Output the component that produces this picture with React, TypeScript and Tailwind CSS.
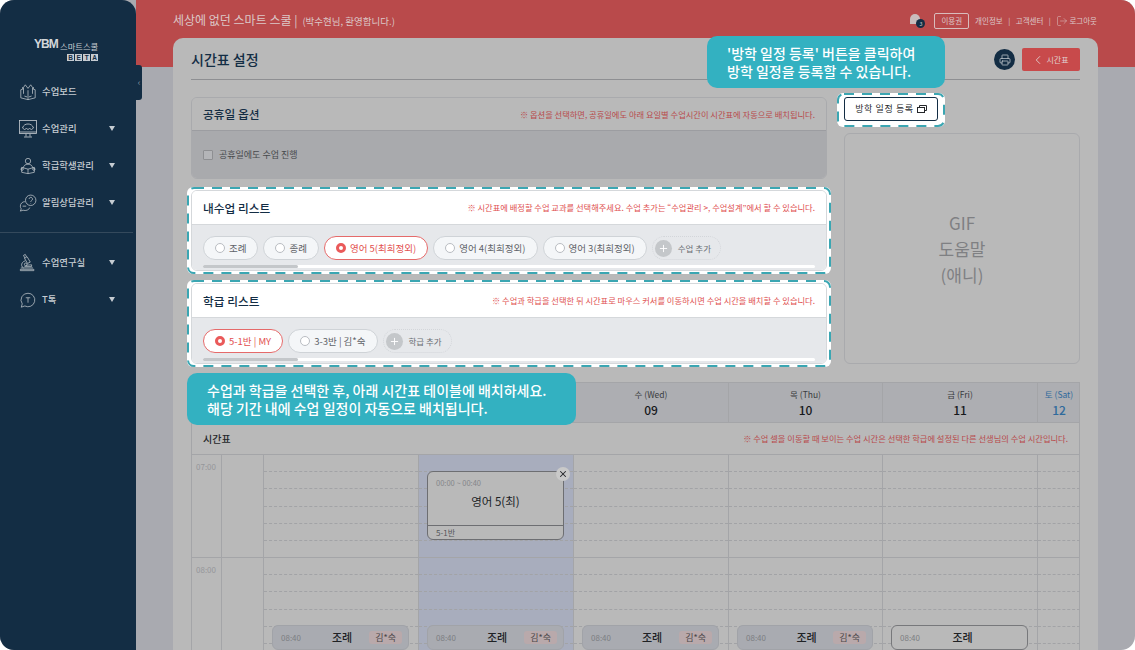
import { ChevronLeft, LogOut, Plus, Printer, X } from "lucide-react";
import type { ReactNode } from "react";

const nanum = "font-['Noto_Sans_CJK_KR','Noto_Sans',sans-serif]";

const topMenu = [
  { label: "수업보드", icon: "book", caret: false },
  { label: "수업관리", icon: "monitor", caret: true },
  { label: "학급학생관리", icon: "student", caret: true },
  { label: "알림상담관리", icon: "chat", caret: true },
];

const bottomMenu = [
  { label: "수업연구실", icon: "lab", caret: true },
  { label: "T톡", icon: "talk", caret: true },
];

// the first three day cells sit under the callout in the picture
const days = [
  { label: "", num: "" },
  { label: "", num: "" },
  { label: "", num: "" },
  { label: "수 (Wed)", num: "09" },
  { label: "목 (Thu)", num: "10" },
  { label: "금 (Fri)", num: "11" },
  { label: "토 (Sat)", num: "12", sat: true },
];

function NavIcon({ name }: { name: string }) {
  const common = {
    width: 18,
    height: 18,
    viewBox: "0 0 20 20",
    fill: "none",
    stroke: "#c9ced3",
    strokeWidth: 0.8,
  };
  if (name === "book") {
    return (
      <svg {...common}>
        <path d="M2 7.5v9l8 2 8-2v-9l-2-.6M2 7.5l2-.6M10 18.5V8" />
        <path d="M5 12V5l2-3 3 4 3-4 2 3v7" />
        <path d="M4 7V4.5M16 7V4.5M6 14.5l3 1M14 14.5l-3 1" />
      </svg>
    );
  }
  if (name === "monitor") {
    return (
      <svg {...common} viewBox="0 0 18 18">
        <rect x="0.5" y="0.5" width="17" height="13" />
        <path d="M0.5 12h17M7 14v2.500M11 14v2.500M5 17h8" />
        <path d="M3.500 8c1-3 3-4 5.500-4s4.500 1 5.500 4l-2 1.500-2-1-1.500 1-1.500-1-2 1z" />
      </svg>
    );
  }
  if (name === "student") {
    return (
      <svg {...common}>
        <circle cx="10" cy="4.500" r="3" />
        <path d="M5 12c0-2.500 2-4 5-4s5 1.500 5 4" />
        <path d="M3 11.500l7 2 7-2v5.500l-7 1.500-7-1.500zM10 13.500v5" />
        <circle cx="3.500" cy="13.500" r="1.300" />
        <circle cx="16.500" cy="13.500" r="1.300" />
      </svg>
    );
  }
  if (name === "chat") {
    return (
      <svg {...common}>
        <circle cx="13" cy="7" r="5.800" />
        <path d="M11.200 5.500a1.900 1.900 0 1 1 2.800 1.800c-.7.4-1 .8-1 1.500M13 10.200v.5" />
        <path d="M6.500 8.500A5 5 0 0 0 1.500 13.500c0 1.300.4 2.300 1 3l-1 2.500 3-1c3 1 6.500 0 7.500-3" />
        <path d="M4 13.500h4" />
      </svg>
    );
  }
  if (name === "lab") {
    return (
      <svg {...common} width={18} height={20}>
        <path d="M5 1.500l2-1 1.500 3-2 1zM6 4.500l3.500 6 3-1.500-3.500-6" />
        <path d="M7 7.500c-3 1-4.500 3-4 5.500.3 1.200 1 2 2 2.500M2 15.500h13.500M1.500 17h15v1.500h-15zM8 12.500l6-.5v2H6" />
        <circle cx="7.500" cy="11.500" r="1.500" />
      </svg>
    );
  }
  return (
    <svg {...common}>
      <path d="M10 2.500a7.500 7.500 0 1 1-3.500 14.100L2.500 18l1.100-3.700A7.500 7.500 0 0 1 10 2.500z" />
      <path d="M7.500 7.500h5M10 7.500v5.500" />
    </svg>
  );
}

function NavItem({ label, icon, caret }: { label: string; icon: string; caret: boolean }) {
  return (
    <div className="flex h-[37px] items-center pl-[19px] pr-[21px]">
      <div className="flex w-[23px] shrink-0 items-center">
        <NavIcon name={icon} />
      </div>
      <span className="flex-1 text-[9.400px] font-medium text-[#c6ccd2]">{label}</span>
      {caret && <span className="h-0 w-0 border-x-[3px] border-t-[5px] border-x-transparent border-t-[#c6ccd2]" />}
    </div>
  );
}

function Logo() {
  return (
    <div className="ml-[34px] flex h-[30px] items-start gap-[2px]">
      <span className="w-[24px] whitespace-nowrap text-[12px] leading-[14px] font-black tracking-[-1px] text-[#d4d7da] font-['Liberation_Sans']">
        YBM
      </span>
      <div className="mt-[4px] flex flex-col items-end gap-[3px]">
        <span className="text-[8.300px] leading-[10px] text-[#c6ccd2]">스마트스쿨</span>
        <div className="flex gap-px">
          {"BETA".split("").map((ch) => (
            <span
              key={ch}
              className="flex h-[7px] w-[7px] items-center justify-center bg-[#c6ccd2] font-['Liberation_Sans'] text-[6.500px] font-bold text-[#132d44]"
            >
              {ch}
            </span>
          ))}
        </div>
      </div>
    </div>
  );
}

function Sidebar() {
  return (
    <aside className="relative z-10 h-full w-[136px] shrink-0 rounded-tr-[14px] bg-[#132d44] pt-[37px]">
      <Logo />
      <nav className="mt-[6px]">
        {topMenu.map((item) => (
          <NavItem key={item.label} {...item} />
        ))}
      </nav>
      <div className="mt-[11px] mb-[11px] mr-[3px] border-t border-[#34495c]" />
      <nav>
        {bottomMenu.map((item) => (
          <NavItem key={item.label} {...item} />
        ))}
      </nav>
      <div className="absolute top-[65px] right-[-6px] flex h-[35px] w-[6px] items-center justify-center rounded-r-[3px] bg-[#132d44] text-[9px] text-[#8492a0]">
        ‹
      </div>
    </aside>
  );
}

function Header() {
  return (
    <header className="flex h-[67px] items-start justify-between bg-[#b94a4b] pt-[13px] pl-[37px] pr-[38px] text-[#dcc8c8]">
      <div className="flex items-baseline gap-[5px]">
        <span className="text-[12px] leading-[14px]">세상에 없던 스마트 스쿨 |</span>
        <span className="text-[9.500px]">(박수현님, 환영합니다.)</span>
      </div>
      <div className="flex items-center text-[7.500px] leading-[14px]">
        <div className="relative mr-[9px] h-[16px] w-[15px]">
          <span className="absolute top-[1px] left-0 h-[10px] w-[10px] rounded-t-full bg-[#c9bcbc]" />
          <span className="absolute top-[6px] left-[6px] flex h-[9px] w-[9px] items-center justify-center rounded-full bg-[#132d44] text-[5.500px] text-[#c6ccd2]">
            3
          </span>
        </div>
        <span className="mr-[6px] rounded-[2px] border border-[#d9bcbc] px-[6px]">이용권</span>
        <span>개인정보</span>
        <span className="mx-[5.500px]">|</span>
        <span>고객센터</span>
        <span className="mx-[5.500px]">|</span>
        <LogOut size={12} strokeWidth={1} className="mr-[1px]" />
        <span>로그아웃</span>
      </div>
    </header>
  );
}

function Note({ children }: { children: ReactNode }) {
  return <p className="text-[8.250px] leading-none text-[#e0504f]">{children}</p>;
}

function Radio({ on }: { on?: boolean }) {
  if (on) {
    return <span className="h-[10px] w-[10px] shrink-0 rounded-full border-[3px] border-[#ea5a5a] bg-white" />;
  }
  return <span className="h-[10px] w-[10px] shrink-0 rounded-full border border-[#b9bdc2] bg-white" />;
}

function Chip({ label, on }: { label: string; on?: boolean }) {
  return (
    <div
      className={
        on
          ? "flex h-[24px] shrink-0 items-center gap-[4px] rounded-full border border-[#e56a6a] bg-white px-[11px] text-[9.500px] text-[#e2504f]"
          : "flex h-[24px] shrink-0 items-center gap-[4px] rounded-full border border-[#cfd3d7] bg-[#f4f6f8] px-[11px] text-[9.500px] text-[#5f6368]"
      }
    >
      <Radio on={on} />
      <span className="whitespace-nowrap">{label}</span>
    </div>
  );
}

function AddChip({ label }: { label: string }) {
  return (
    <div className="flex h-[24px] shrink-0 items-center gap-[6px] rounded-full border border-dotted border-[#d3d6da] pl-[2px] pr-[9px] text-[8.500px] text-[#6a6e73]">
      <span className="flex h-[17px] w-[17px] items-center justify-center rounded-full bg-[#c4c7ca] text-white">
        <Plus size={11} strokeWidth={2} />
      </span>
      <span className="whitespace-nowrap">{label}</span>
    </div>
  );
}

function DashedFrame({ children, className }: { children: ReactNode; className: string }) {
  return (
    <div className={`relative rounded-[6px] bg-white ${className}`}>
      <svg className="pointer-events-none absolute inset-0 h-full w-full">
        <rect
          x="1"
          y="1"
          rx="6"
          className="h-[calc(100%-2px)] w-[calc(100%-2px)]"
          fill="none"
          stroke="#3ba6b2"
          strokeWidth="2"
          strokeDasharray="10 8"
        />
      </svg>
      {children}
    </div>
  );
}

function ListPanel({
  title,
  note,
  chips,
  add,
}: {
  title: string;
  note: string;
  chips: { label: string; on?: boolean }[];
  add: string;
}) {
  return (
    <DashedFrame className="-mx-[4px] px-[4px] py-[3px]">
      <div className="overflow-hidden rounded-[6px] border border-[#d5d8db]">
        <div className="flex h-[34px] items-center justify-between border-b border-[#d5d8db] bg-white px-[11px]">
          <h3 className="text-[11.700px] font-medium text-[#132d44]">{title}</h3>
          <Note>{note}</Note>
        </div>
        <div className="bg-[#e6e8eb] px-[11px] pt-[11px] pb-[2px]">
          <div className="flex gap-[5px]">
            {chips.map((c) => (
              <Chip key={c.label} {...c} />
            ))}
            <AddChip label={add} />
          </div>
          <div className="mt-[5px] h-[3px] rounded-full bg-white">
            <div className="h-full w-[95px] rounded-full bg-[#c4c7ca]" />
          </div>
        </div>
      </div>
    </DashedFrame>
  );
}

function HourBlock({ dashed }: { dashed: boolean }) {
  return (
    <div className="flex h-[103px] flex-col border-b border-[#a4a5a8]">
      {[0, 1, 2, 3, 4, 5].map((i) => (
        <div
          key={i}
          className={dashed && i < 5 ? "flex-1 border-b border-dashed border-[#a2a3a6]" : "flex-1"}
        />
      ))}
    </div>
  );
}

function Morning({ tag, plain }: { tag?: string; plain?: boolean }) {
  return (
    <div
      className={
        plain
          ? "absolute top-[170px] right-[9px] left-[8px] flex h-[25px] items-center rounded-[6px] border border-[#77787b] bg-[#b9b9b9] pr-[6px] pl-[8px]"
          : "absolute top-[170px] right-[9px] left-[8px] flex h-[25px] items-center rounded-[6px] border border-[#a1a3a8] bg-[#a9abb1] pr-[6px] pl-[8px]"
      }
    >
      <span className="w-[34px] text-[8px] text-[#7c7e82]">08:40</span>
      <span className="flex-1 text-center text-[11px] font-medium text-[#202225]">조례</span>
      {tag ? (
        <span className="rounded-[3px] bg-[#b9a9ab] px-[6px] text-[9px] text-[#4a4648]">{tag}</span>
      ) : (
        <span className="w-[30px]" />
      )}
    </div>
  );
}

function Timetable() {
  const cols = [0, 1, 2, 3, 4];
  return (
    <section className="mt-[15px] border border-[#a4a5a8] border-b-0">
      <div className="grid grid-cols-[29px_42px_155px_155px_155px_154px_155px_43px] border-b border-[#a4a5a8] bg-[#adaeb2]">
        <div />
        {days.map((d, i) => (
          <div key={i} className="flex h-[39px] flex-col items-center border-l border-[#a4a5a8] pt-[5px]">
            <span className={d.sat ? "text-[8.500px] leading-[13px] text-[#2f6a9c]" : "text-[8.500px] leading-[13px] text-[#3a3c40]"}>
              {d.label}
            </span>
            <span className={d.sat ? "mt-px text-[12px] leading-[16px] font-medium text-[#2f6a9c]" : "mt-px text-[12px] leading-[16px] font-medium text-[#16181b]"}>
              {d.num}
            </span>
          </div>
        ))}
      </div>
      <div className="flex h-[32px] items-center justify-between border-b border-[#a4a5a8] px-[11px]">
        <span className="text-[10px] font-medium text-[#25272a]">시간표</span>
        <p className="text-[8.250px] text-[#b84a4b]">※ 수업 셀을 이동할 때 보이는 수업 시간은 선택한 학급에 설정된 다른 선생님의 수업 시간입니다.</p>
      </div>
      <div className="grid grid-cols-[29px_42px_155px_155px_155px_154px_155px_43px]">
        <div className="text-[8px] text-[#95969a]">
          <div className="h-[103px] border-b border-[#a4a5a8] pt-[6px] pl-[4px]">07:00</div>
          <div className="h-[103px] border-b border-[#a4a5a8] pt-[6px] pl-[4px]">08:00</div>
        </div>
        <div className="border-l border-[#a4a5a8]">
          <HourBlock dashed={false} />
          <HourBlock dashed={false} />
        </div>
        {cols.map((i) => (
          <div key={i} className={i === 1 ? "relative border-l border-[#a4a5a8] bg-[#a8adbd]" : "relative border-l border-[#a4a5a8]"}>
            <HourBlock dashed />
            <HourBlock dashed />
            {i === 1 && (
              <div className="absolute top-[16px] right-[9px] left-[8px] flex h-[69px] flex-col rounded-[6px] border border-[#6d6e72] bg-[#b9b9b9]">
                <span className="pt-[5px] pl-[8px] text-[7.500px] leading-[12px] text-[#85868a]">00:00 ~ 00:40</span>
                <span className="flex-1 pt-[4px] text-center text-[11.500px] text-[#202225]">영어 5(최)</span>
                <span className="border-t border-[#6d6e72] pl-[8px] text-[8px] leading-[13px] text-[#55565a]">5-1반</span>
                <span className="absolute -top-[5px] -right-[7px] flex h-[14px] w-[14px] items-center justify-center rounded-full bg-[#c9c9c9] text-[#25272a]">
                  <X size={10} strokeWidth={2.500} />
                </span>
              </div>
            )}
            <Morning tag={i < 4 ? "김*숙" : undefined} plain={i === 4} />
          </div>
        ))}
        <div className="border-l border-[#a4a5a8]">
          <HourBlock dashed />
          <HourBlock dashed />
        </div>
      </div>
    </section>
  );
}

function Callout({ className, children }: { className: string; children: ReactNode }) {
  return (
    <div className={`absolute z-20 rounded-[10px] bg-[#33b1c1] text-[14px] leading-[18px] font-medium text-white ${className}`}>
      {children}
    </div>
  );
}

function MainCard() {
  return (
    <div className="relative ml-[37px] mt-[-29px] h-[640px] w-[925px] rounded-t-[10px] bg-[#b9b9b9] px-[18px]">
      <div className="flex h-[42px] items-center justify-between border-b border-[#8e8f92] pt-[2px]">
        <h2 className="text-[14px] font-medium text-[#132d44]">시간표 설정</h2>
        <div className="flex items-center gap-[7px]">
          <span className="flex h-[21px] w-[21px] items-center justify-center rounded-full bg-[#132d44] text-[#c6ccd2]">
            <Printer size={12} strokeWidth={1.500} />
          </span>
          <button className="flex h-[23px] w-[58px] items-center justify-center gap-[1px] rounded-[2px] bg-[#c84a4b] pr-[2px] text-[8px] text-[#e0d0d0]">
            <ChevronLeft size={14} strokeWidth={1.500} />
            시간표
          </button>
        </div>
      </div>

      <div className="mt-[17px] flex gap-[17px]">
        <div className="flex w-[636px] flex-col">
          <div className="overflow-hidden rounded-[6px] border border-[#a9aaad]">
            <div className="flex h-[33px] items-center justify-between border-b border-[#9c9da1] bg-[#b9b9b9] px-[11px]">
              <h3 className="text-[11.700px] font-medium text-[#132d44]">공휴일 옵션</h3>
              <p className="text-[8.250px] text-[#b84a4b]">※ 옵션을 선택하면, 공휴일에도 아래 요일별 수업시간이 시간표에 자동으로 배치됩니다.</p>
            </div>
            <div className="flex h-[47px] items-center gap-[6px] bg-[#a9aaad] px-[11px]">
              <span className="h-[10px] w-[10px] rounded-[1px] border border-[#8e8f92] bg-[#b4b5b8]" />
              <span className="text-[9px] text-[#47494c]">공휴일에도 수업 진행</span>
            </div>
          </div>
          <div className="mt-[8px] flex flex-col gap-[6px]">
            <ListPanel
              title="내수업 리스트"
              note="※ 시간표에 배정할 수업 교과를 선택해주세요. 수업 추가는 “수업관리 >, 수업설계”에서 할 수 있습니다."
              chips={[
                { label: "조례" },
                { label: "종례" },
                { label: "영어 5(최희정외)", on: true },
                { label: "영어 4(최희정외)" },
                { label: "영어 3(최희정외)" },
              ]}
              add="수업 추가"
            />
            <ListPanel
              title="학급 리스트"
              note="※ 수업과 학급을 선택한 뒤 시간표로 마우스 커서를 이동하시면 수업 시간을 배치할 수 있습니다."
              chips={[{ label: "5-1반 | MY", on: true }, { label: "3-3반 | 김*숙" }]}
              add="학급 추가"
            />
          </div>
        </div>
        <div className="flex w-[236px] flex-col">
          <DashedFrame className="-mt-[4px] -ml-[7px] w-[108px] px-[7px] pt-[4px] pb-[6px]">
            <button className="flex h-[24px] w-[94px] items-center justify-center gap-[2px] rounded-[3px] border border-[#132d44] bg-white text-[9px] tracking-[0.6px] text-[#25272a]">
              방학 일정 등록
              <svg width="10" height="8" viewBox="0 0 10 8" fill="none" stroke="#25272a" strokeWidth="1" className="ml-[1px]">
                <path d="M2.500 2.500V.5h7v5h-2" />
                <rect x="0.5" y="2.500" width="7" height="5" />
              </svg>
            </button>
          </DashedFrame>
          <div className="mt-[6px] flex h-[231px] flex-col items-center justify-center rounded-[6px] border border-[#a9aaad] text-center text-[17px] leading-[26px] text-[#7f8083]">
            <span>GIF</span>
            <span>도움말</span>
            <span>(애니)</span>
          </div>
        </div>
      </div>

      <Timetable />

      <Callout className="top-[-2px] left-[534px] flex h-[52px] w-[238px] flex-col justify-center pl-[20px]">
        <span>'방학 일정 등록' 버튼을 클릭하여</span>
        <span>방학 일정을 등록할 수 있습니다.</span>
      </Callout>
      <Callout className="top-[335px] left-[14px] flex h-[52px] w-[389px] flex-col justify-center pl-[20px]">
        <span>수업과 학급을 선택한 후, 아래 시간표 테이블에 배치하세요.</span>
        <span>해당 기간 내에 수업 일정이 자동으로 배치됩니다.</span>
      </Callout>
    </div>
  );
}

export default function App() {
  return (
    <div className="h-[650px] w-[1135px] bg-white">
      <div className={`flex h-full w-full overflow-hidden rounded-[14px] bg-[#a9aab0] ${nanum}`}>
        <Sidebar />
        <main className="min-w-0 flex-1 overflow-hidden">
          <Header />
          <MainCard />
        </main>
      </div>
    </div>
  );
}
